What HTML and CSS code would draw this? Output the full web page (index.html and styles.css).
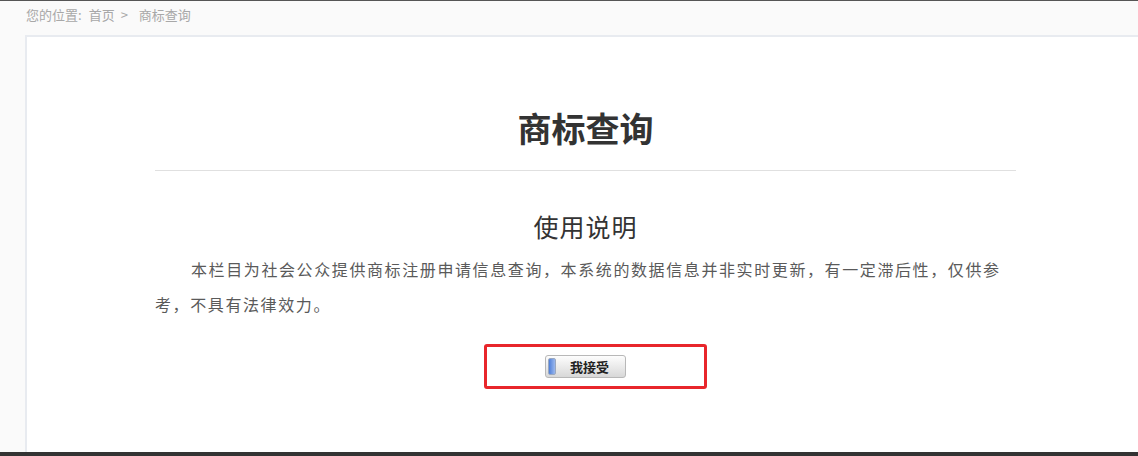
FILE: index.html
```html
<!DOCTYPE html>
<html lang="zh-CN">
<head>
    <meta charset="UTF-8">
    <meta name="viewport" content="width=device-width, initial-scale=1.0">
    <title>商标查询</title>
    <link rel="stylesheet" href="styles.css">
</head>
<body>
    <div class="crumb"><span>您的位置:</span><span class="crumb-link">首页</span><span class="crumb-sep">&gt;</span><span>商标查询</span></div>
    <div class="mainbox">
        <div class="inner">
            <h1 class="title">商标查询</h1>
            <div class="line"></div>
            <h2 class="subtitle">使用说明</h2>
            <p class="desc">本栏目为社会公众提供商标注册申请信息查询，本系统的数据信息并非实时更新，有一定滞后性，仅供参考，不具有法律效力。</p>
            <div class="actions">
                <div class="mark"></div>
                <button class="accept" type="button"><span class="knob"></span><span class="label">我接受</span></button>
            </div>
        </div>
    </div>
    <div class="taskbar"></div>
</body>
</html>
```

FILE: styles.css
```css
*{
    padding: 0;
    margin: 0;
    box-sizing: border-box;
}

body{
    height: 456px;
    overflow: hidden;
    background-color: #fafafa;
    border-top: 1px solid #555;
    font-family: "Noto Sans CJK SC", "Noto Sans", sans-serif;
    display: flex;
    flex-direction: column;
}

.crumb {
    height: 34px;
    padding-left: 26px;
    font-size: 13px;
    line-height: 27px;
    color: #a8a8a8;
}

.crumb-link {
    margin-left: 7px;
}

.crumb-sep {
    margin-left: 6px;
    margin-right: 11px;
}

.mainbox {
    flex: 1;
    margin-left: 25px;
    background-color: #fff;
    border-top: 2px solid #e8ebf0;
    border-left: 2px solid #e8ebf0;
}

.inner {
    width: 861px;
    margin-left: 128px;
    padding-top: 67px;
}

.title {
    font-size: 34px;
    line-height: 48px;
    font-weight: bold;
    color: #333;
    text-align: center;
}

.line {
    height: 1px;
    margin-top: 18px;
    background-color: #e0e0e0;
}

.subtitle {
    margin-top: 35px;
    font-size: 25px;
    line-height: 40px;
    font-weight: normal;
    color: #333;
    text-align: center;
    letter-spacing: 1px;
}

.desc {
    margin-top: 6px;
    font-size: 16px;
    line-height: 35px;
    letter-spacing: 1.6px;
    text-indent: 36px;
    color: #5a5a5a;
}

.actions {
    position: relative;
    margin-top: 22px;
    height: 45px;
    display: flex;
    justify-content: center;
    align-items: center;
}

.mark {
    position: absolute;
    left: 329px;
    top: 0;
    width: 223px;
    height: 45px;
    border: 3px solid #e8262b;
    border-radius: 3px;
}

.accept {
    display: flex;
    align-items: center;
    width: 81px;
    height: 23px;
    padding: 2px;
    border: 1px solid #b8b8b8;
    border-radius: 3px;
    background: linear-gradient(#fdfdfd, #e9e9e9 55%, #d8d8d8);
    font-family: inherit;
    cursor: pointer;
}

.knob {
    width: 8px;
    height: 17px;
    border-radius: 2px;
    background: linear-gradient(to right, #4f7fd8, #9bb8ee);
    border: 1px solid #9aa8c0;
}

.label {
    flex: 1;
    font-size: 13px;
    font-weight: bold;
    color: #222;
    text-align: center;
}

.taskbar {
    height: 4px;
    background-color: #333;
}
```
